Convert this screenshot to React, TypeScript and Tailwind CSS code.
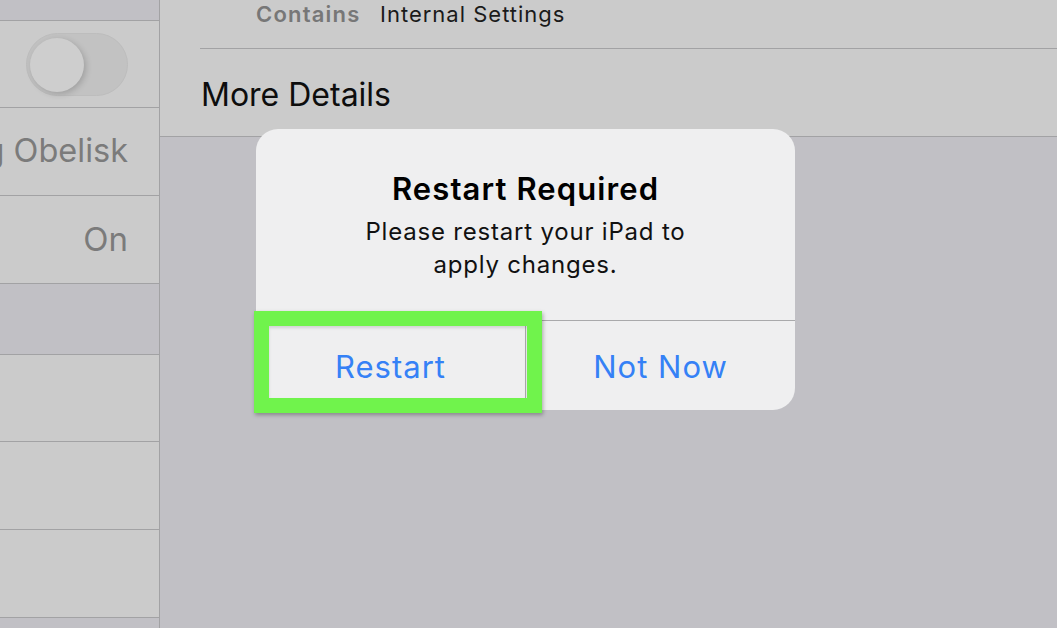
import React from 'react';

const font = { fontFamily: 'Inter, "Noto Sans", sans-serif' };

const SideRow = ({ h, children, dim = false }: { h: string; children?: React.ReactNode; dim?: boolean }) => (
  <div
    className={`${h} ${dim ? 'bg-[#c1c0c5]' : 'bg-[#cbcbcb]'} border-b border-[#a2a2a4] flex items-center justify-end overflow-hidden pr-[31px]`}
  >
    {children}
  </div>
);

const Toggle = () => (
  <div className="relative w-[102px] h-[63px] rounded-full bg-[#c2c2c2] border border-[#bdbdbd] shrink-0">
    <div className="absolute left-[3px] top-[4px] w-[54px] h-[54px] rounded-full bg-[#cecece] shadow-[2px_2px_6px_rgba(0,0,0,0.18)]" />
  </div>
);

export default function App() {
  return (
    <div className="relative w-[1057px] h-[628px] overflow-hidden flex bg-[#c1c0c5]" style={font}>
      {/* sidebar */}
      <div className="w-[160px] h-full border-r border-[#a2a2a4] flex flex-col shrink-0">
        <SideRow h="h-[21px]" dim />
        <SideRow h="h-[87px]">
          <Toggle />
        </SideRow>
        <SideRow h="h-[88px]">
          <span className="text-[32.5px] text-[#7b7b7b] whitespace-nowrap">Ring Obelisk</span>
        </SideRow>
        <SideRow h="h-[88px]">
          <span className="text-[33px] text-[#7b7b7b] whitespace-nowrap">On</span>
        </SideRow>
        <SideRow h="h-[71px]" dim />
        <SideRow h="h-[87px]" />
        <SideRow h="h-[88px]" />
        <SideRow h="h-[88px]" />
        <div className="flex-1 bg-[#c1c0c5]" />
      </div>

      {/* detail panel */}
      <div className="flex-1 flex flex-col">
        <div className="bg-[#cbcbcb] border-b border-[#a2a2a4] h-[137px] flex flex-col">
          <div className="ml-[40px] h-[49px] border-b border-[#a2a2a4] flex items-start">
            <div className="flex items-center h-[28px] text-[22px] leading-[28px] whitespace-nowrap">
              <span className="ml-[56px] w-[124px] font-semibold tracking-[1.2px] text-[#777777]">Contains</span>
              <span className="tracking-[1px] text-[#1a1a1a]">Internal Settings</span>
            </div>
          </div>
          <div className="flex-1 flex items-center pl-[41px] pt-[4px]">
            <span className="text-[32px] text-[#0d0d0d]">More Details</span>
          </div>
        </div>
        <div className="flex-1 bg-[#c1c0c5]" />
      </div>

      {/* alert */}
      <div className="absolute left-[256px] top-[129px] w-[539px] h-[281px] rounded-[22px] bg-[#efeff0] flex flex-col overflow-hidden">
        <div className="h-[192px] border-b border-[#a9a9ab] flex flex-col items-center pt-[41px] text-center">
          <div className="text-[31px] leading-[37px] font-semibold tracking-[1.1px] text-black">Restart Required</div>
          <div className="mt-[8px] text-[24px] leading-[33px] tracking-[0.8px] text-[#111]">
            Please restart your iPad to
            <br />
            apply changes.
          </div>
        </div>
        <div className="flex-1 flex pt-[3px] text-[31px] tracking-[1px] text-[#3581f6]">
          <div className="flex-1 border-r border-[#a9a9ab] -mt-[3px] pt-[3px] flex items-center justify-center">
            Restart
          </div>
          <div className="flex-1 flex items-center justify-center">Not Now</div>
        </div>
      </div>

      {/* highlight */}
      <div className="absolute left-[254px] top-[311px] w-[288px] h-[102px] border-[15px] border-[#70f34c] shadow-[1px_2px_4px_rgba(0,0,0,0.3),inset_0_2px_3px_rgba(0,0,0,0.12)]" />
    </div>
  );
}
